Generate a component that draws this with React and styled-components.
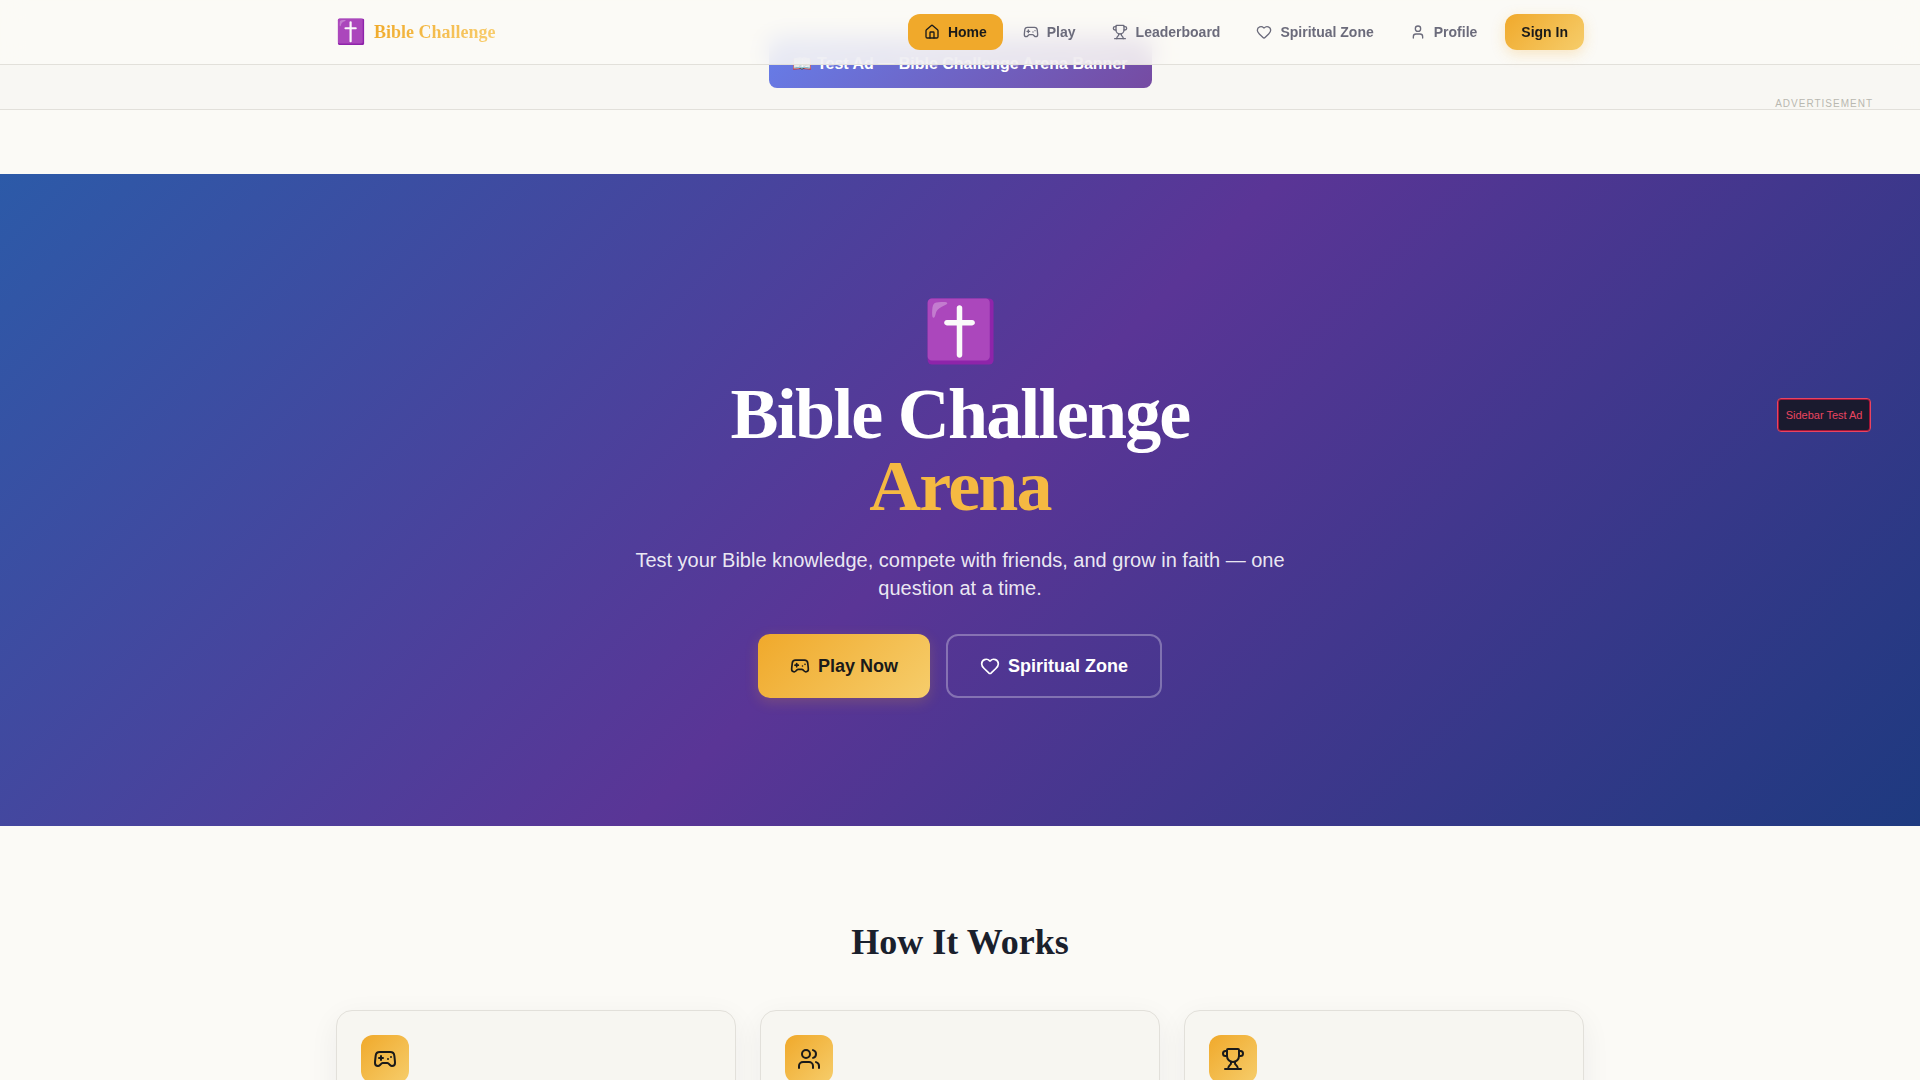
import styled, { createGlobalStyle } from 'styled-components';
import { House, Gamepad2, Trophy, Heart, User, Users } from 'lucide-react';

const GlobalStyle = createGlobalStyle`
    html, body {
        margin: 0;
        padding: 0;
        background: #fbfaf6;
        font-family: 'Liberation Sans', Arial, sans-serif;
        color: #1a202c;
        overflow-x: hidden;
    }
    html::-webkit-scrollbar {
        display: none;
    }
    * {
        box-sizing: border-box;
    }
`;

const Nav = styled.nav`
    position: fixed;
    top: 0;
    left: 0;
    right: 0;
    z-index: 10;
    height: 65px;
    background: rgba(251, 250, 246, 0.85);
    backdrop-filter: blur(12px);
    border-bottom: 1px solid #e2e0da;
`;

const NavInner = styled.div`
    max-width: 1280px;
    height: 64px;
    margin: 0 auto;
    padding: 0 16px;
    display: flex;
    align-items: center;
    justify-content: space-between;
`;

const Logo = styled.a`
    display: flex;
    align-items: center;
    gap: 8px;
`;

const LogoEmoji = styled.span`
    font-size: 24px;
    line-height: 32px;
`;

const LogoText = styled.span`
    font-family: 'Liberation Serif', 'Times New Roman', serif;
    font-size: 18px;
    font-weight: 700;
    background: linear-gradient(135deg, #f0a928, #f8cf72);
    -webkit-background-clip: text;
    background-clip: text;
    color: transparent;
`;

const NavLinks = styled.div`
    display: flex;
    align-items: center;
    gap: 4px;
`;

const NavLink = styled.a`
    display: flex;
    align-items: center;
    gap: 8px;
    height: 36px;
    padding: 0 16px;
    border-radius: 12px;
    font-size: 14px;
    font-weight: 700;
    color: ${(props) => (props.$active ? '#1a1a1a' : '#6b6b7b')};
    background: ${(props) => (props.$active ? '#f0a92b' : 'transparent')};
`;

const SignIn = styled.button`
    height: 36px;
    margin-left: 8px;
    padding: 0 16px;
    border: 0;
    border-radius: 12px;
    font-family: inherit;
    font-size: 14px;
    font-weight: 700;
    color: #1a1a1a;
    background: linear-gradient(135deg, #f0a92b, #f6cd6b);
    box-shadow: 0 4px 14px rgba(240, 169, 40, 0.25);
`;

const AdStrip = styled.div`
    height: 110px;
    padding-top: 38px;
    display: flex;
    justify-content: center;
    align-items: flex-start;
    background: #f8f7f3;
    border-bottom: 1px solid #e2e0da;
`;

const AdBanner = styled.div`
    width: 383px;
    height: 50px;
    display: flex;
    align-items: center;
    justify-content: center;
    border-radius: 8px;
    font-size: 16px;
    font-weight: 700;
    color: #fff;
    background: linear-gradient(135deg, #667eea, #764ba2);
`;

const SideAd = styled.aside`
    position: absolute;
    top: 98px;
    right: 47px;
    z-index: 5;
    display: flex;
    flex-direction: column;
    align-items: center;
    gap: 288px;
`;

const SideLabel = styled.span`
    font-size: 10px;
    line-height: 12px;
    letter-spacing: 1px;
    color: #b8b8b0;
`;

const SideBox = styled.div`
    width: 94px;
    height: 34px;
    display: flex;
    align-items: center;
    justify-content: center;
    border: 1px solid #e94560;
    border-radius: 4px;
    font-size: 11px;
    color: #e94560;
    background: #1a1a2e;
    box-shadow: inset 0 0 0 1px #a01437;
`;

const Main = styled.main`
    padding-top: 64px;
`;

const Hero = styled.section`
    padding: 128px 16px;
    display: flex;
    flex-direction: column;
    align-items: center;
    text-align: center;
    color: #fff;
    background: linear-gradient(135deg, #2c5aa8 0%, #5a3596 50%, #1e3a80 100%);
`;

const HeroEmoji = styled.div`
    font-size: 60px;
    line-height: 1;
    margin-bottom: 16px;
`;

const HeroTitle = styled.h1`
    margin: 0 0 24px;
    font-family: 'Liberation Serif', 'Times New Roman', serif;
    font-size: 72px;
    line-height: 72px;
    font-weight: 700;
    letter-spacing: -1.8px;
`;

const Accent = styled.span`
    display: block;
    color: #f5b942;
`;

const HeroText = styled.p`
    margin: 0 0 32px;
    max-width: 672px;
    font-size: 20px;
    line-height: 28px;
    color: rgba(255, 255, 255, 0.9);
`;

const HeroButtons = styled.div`
    display: flex;
    gap: 16px;
`;

const HeroButton = styled.button`
    height: 64px;
    padding: 0 32px;
    display: flex;
    align-items: center;
    gap: 8px;
    border-radius: 12px;
    font-family: inherit;
    font-size: 18px;
    font-weight: 700;
    color: ${(props) => (props.$primary ? '#1a1a1a' : '#fff')};
    border: ${(props) => (props.$primary ? '0' : '2px solid rgba(255, 255, 255, 0.3)')};
    background: ${(props) => (props.$primary ? 'linear-gradient(135deg, #f0a92b, #f6cd6b)' : 'transparent')};
    box-shadow: ${(props) => (props.$primary ? '0 4px 14px rgba(240, 169, 40, 0.2)' : 'none')};
`;

const Features = styled.section`
    max-width: 1280px;
    margin: 0 auto;
    padding: 96px 16px;
`;

const SectionTitle = styled.h2`
    margin: 0 0 48px;
    font-family: 'Liberation Serif', 'Times New Roman', serif;
    font-size: 36px;
    line-height: 40px;
    font-weight: 700;
    text-align: center;
    color: #1a202c;
`;

const CardGrid = styled.div`
    display: grid;
    grid-template-columns: repeat(3, 1fr);
    gap: 24px;
`;

const Card = styled.div`
    height: 200px;
    padding: 24px;
    border: 1px solid #e2e0da;
    border-radius: 16px;
    background: #f7f6f1;
    box-shadow: 0 8px 30px rgba(26, 32, 44, 0.06);
`;

const IconBox = styled.div`
    width: 48px;
    height: 48px;
    display: flex;
    align-items: center;
    justify-content: center;
    border-radius: 12px;
    color: #1a1a1a;
    background: linear-gradient(135deg, #f0a92b, #f6cd6b);
`;

const links = [
    { label: 'Home', icon: House, active: true },
    { label: 'Play', icon: Gamepad2 },
    { label: 'Leaderboard', icon: Trophy },
    { label: 'Spiritual Zone', icon: Heart },
    { label: 'Profile', icon: User },
];

const cards = [Gamepad2, Users, Trophy];

export default function App() {
    return (
        <>
            <GlobalStyle />
            <Nav>
                <NavInner>
                    <Logo>
                        <LogoEmoji>✝️</LogoEmoji>
                        <LogoText>Bible Challenge</LogoText>
                    </Logo>
                    <NavLinks>
                        {links.map(({ label, icon: Icon, active }) => (
                            <NavLink key={label} $active={active}>
                                <Icon size={16} />
                                {label}
                            </NavLink>
                        ))}
                        <SignIn>Sign In</SignIn>
                    </NavLinks>
                </NavInner>
            </Nav>
            <AdStrip>
                <AdBanner>📖 Test Ad — Bible Challenge Arena Banner</AdBanner>
            </AdStrip>
            <SideAd>
                <SideLabel>ADVERTISEMENT</SideLabel>
                <SideBox>Sidebar Test Ad</SideBox>
            </SideAd>
            <Main>
                <Hero>
                    <HeroEmoji>✝️</HeroEmoji>
                    <HeroTitle>
                        Bible Challenge
                        <Accent>Arena</Accent>
                    </HeroTitle>
                    <HeroText>
                        Test your Bible knowledge, compete with friends, and grow in faith — one question at a time.
                    </HeroText>
                    <HeroButtons>
                        <HeroButton $primary>
                            <Gamepad2 size={20} />
                            Play Now
                        </HeroButton>
                        <HeroButton>
                            <Heart size={20} />
                            Spiritual Zone
                        </HeroButton>
                    </HeroButtons>
                </Hero>
                <Features>
                    <SectionTitle>How It Works</SectionTitle>
                    <CardGrid>
                        {cards.map((Icon, i) => (
                            <Card key={i}>
                                <IconBox>
                                    <Icon size={24} />
                                </IconBox>
                            </Card>
                        ))}
                    </CardGrid>
                </Features>
            </Main>
        </>
    );
}
